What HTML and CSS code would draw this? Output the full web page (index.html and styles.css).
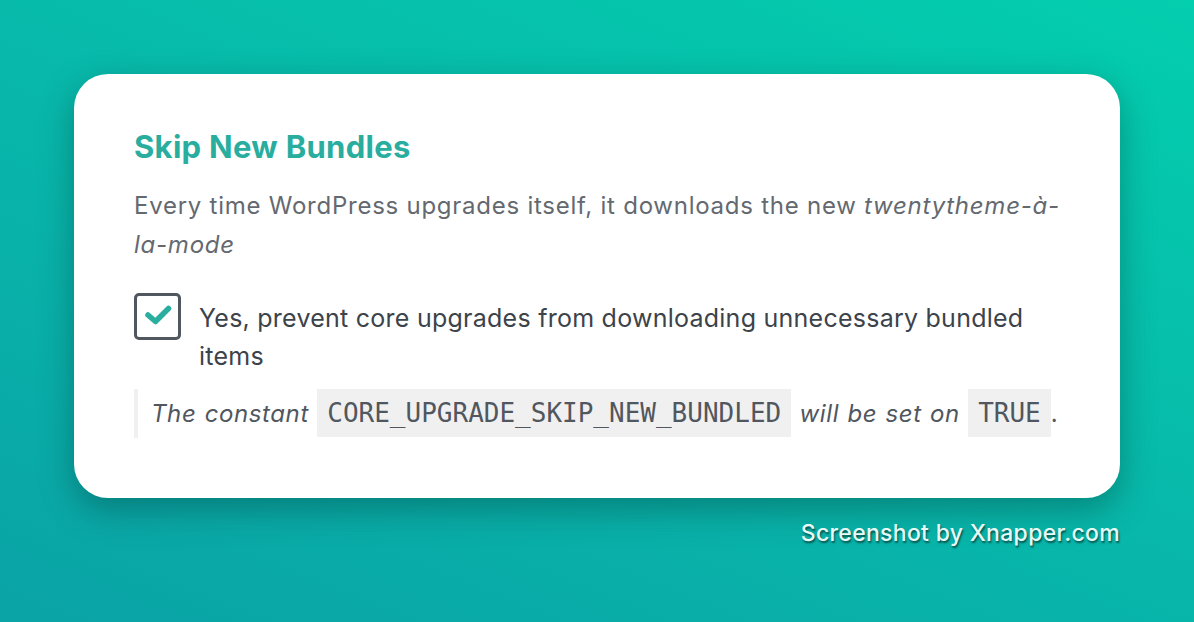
FILE: index.html
```html
<!DOCTYPE html>
<html lang="en">
<head>
    <meta charset="UTF-8">
    <meta name="viewport" content="width=device-width, initial-scale=1.0">
    <title>Skip New Bundles</title>
    <link rel="stylesheet" href="styles.css">
</head>
<body>
    <div class="frame">
        <div class="card">
            <h2 class="title">Skip New Bundles</h2>
            <p class="desc">Every time WordPress upgrades itself, it downloads the new <em>twentytheme-à-la-mode</em></p>

            <label class="option">
                <span class="checkbox">
                    <svg width="41" height="41" viewBox="0 0 41 41">
                        <path d="M11 19 L18.5 25.5 L31.5 12.5" fill="none" stroke="#2aae9f" stroke-width="5.5" stroke-linecap="round" stroke-linejoin="round"/>
                    </svg>
                </span>
                <span class="option-text">Yes, prevent core upgrades from downloading unnecessary bundled items</span>
            </label>

            <div class="note">
                <em>The constant</em> <code>CORE_UPGRADE_SKIP_NEW_BUNDLED</code> <em>will be set on</em> <code>TRUE</code>.
            </div>
        </div>
        <div class="credit">Screenshot by Xnapper.com</div>
    </div>
</body>
</html>
```

FILE: styles.css
```css
html, body { margin: 0; height: 100%; }
body {
    font-family: Inter, "Noto Sans", sans-serif;
    background: linear-gradient(22deg, #0aa3a6 0%, #08b8aa 50%, #03ceae 100%);
    overflow: hidden;
}
.frame { width: 1046px; padding: 74px 0 0 74px; }

.card {
    background: #fff;
    border-radius: 34px;
    padding: 55px 60px 60px;
    box-shadow: 0 12px 34px rgba(0, 40, 40, 0.35);
}
.title { margin: 0; font-size: 31px; line-height: 36px; font-weight: 700; color: #29ad9f; letter-spacing: 0.3px; }
.desc { margin: 21px 0 0; font-size: 24px; line-height: 39px; letter-spacing: 0.75px; color: #646970; }

.option { display: flex; align-items: flex-start; gap: 18px; margin-top: 29px; color: #3c434a; font-size: 25px; line-height: 38px; letter-spacing: 0.25px; }
.checkbox { flex: none; width: 41px; height: 41px; border: 3px solid #50575e; border-radius: 5px; }
.checkbox svg { display: block; }
.option-text { padding-top: 6px; }

.note {
    margin-top: 14px;
    border-left: 4px solid #f0f0f1;
    padding-left: 13px;
    font-size: 24px;
    line-height: 49px;
    letter-spacing: 0.6px;
    word-spacing: 1px;
    color: #50575e;
}
.note code {
    font-family: "DejaVu Sans Mono", monospace;
    font-size: 26px;
    letter-spacing: 0;
    word-spacing: 0;
    background: #f0f0f1;
    padding: 0 10px;
    display: inline-block;
    line-height: 48px;
    vertical-align: top;
}

.credit {
    margin-top: 21px;
    text-align: right;
    font-size: 23px;
    line-height: 28px;
    font-weight: 500;
    letter-spacing: 0.3px;
    color: #e6faf6;
    text-shadow: 1px 2px 2px rgba(0, 0, 0, 0.55);
}
```
